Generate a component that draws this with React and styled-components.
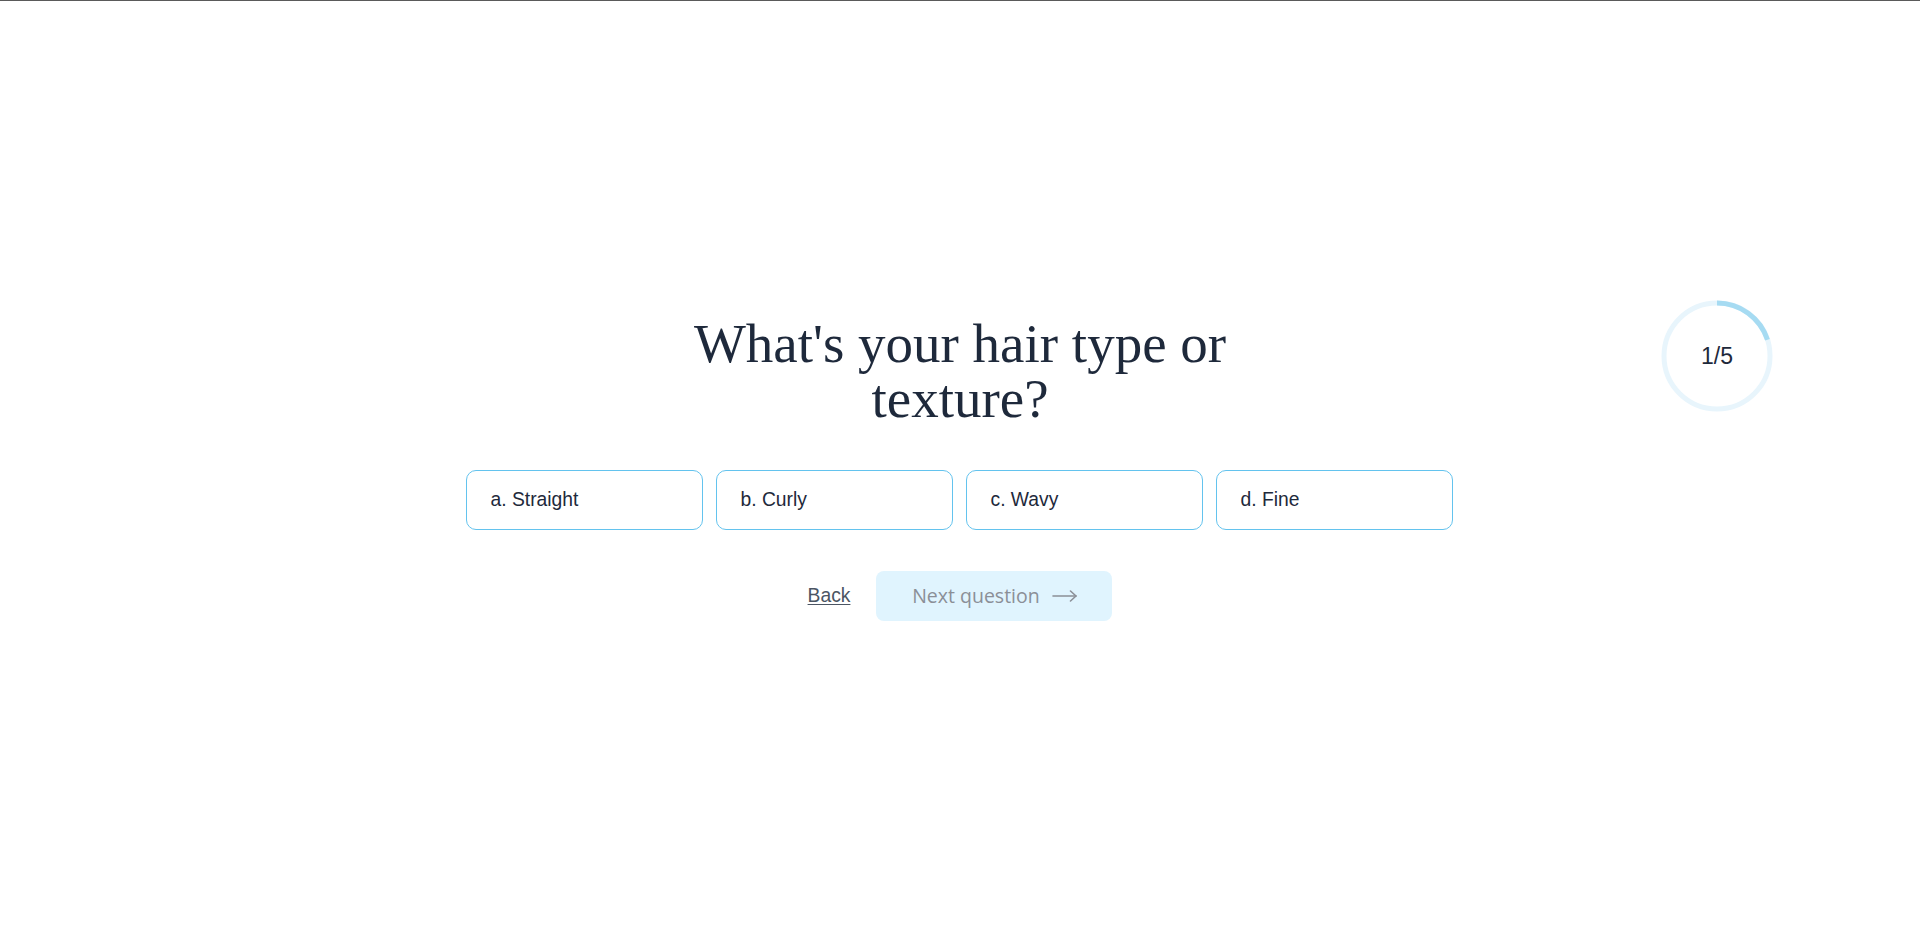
import React, { useState } from 'react'
import styled, { createGlobalStyle } from 'styled-components'

const options = ['a. Straight', 'b. Curly', 'c. Wavy', 'd. Fine']

export default () => {
  const [ selected, setSelected ] = useState(null)
  const step = 1
  const total = 5
  const r = 53
  const circ = 2 * Math.PI * r

  return(
  <Page>
    <GlobalStyle />
    <Quiz>
      <Title>What's your hair type or texture?</Title>
      <Options>
        {options.map(o => (
          <Option key={o} active={selected === o ? 'true' : 'false'} onClick={() => setSelected(o)}>{o}</Option>
        ))}
      </Options>
      <Actions>
        <Back href="#">Back</Back>
        <Next disabled={!selected}>
          Next question
          <svg width="25" height="12" viewBox="0 0 25 12" fill="none" stroke="currentColor" strokeWidth="1.6" strokeLinecap="round" strokeLinejoin="round">
            <path d="M1 6h23" />
            <path d="M18.5 1l5.5 5-5.5 5" />
          </svg>
        </Next>
      </Actions>
    </Quiz>
    <Progress>
      <svg width="112" height="112" viewBox="0 0 112 112">
        <circle cx="56" cy="56" r={r} fill="none" stroke="#e8f5fc" strokeWidth="5" />
        <circle cx="56" cy="56" r={r} fill="none" stroke="#a6dbf2" strokeWidth="5"
          strokeDasharray={`${circ * step / total} ${circ}`} transform="rotate(-90 56 56)" />
      </svg>
      <Count>{step}/{total}</Count>
    </Progress>
  </Page>
)}

const GlobalStyle = createGlobalStyle`
  html, body {
    margin: 0;
    padding: 0;
    background: #fff;
  }
`

const Page = styled.main`
  position: relative;
  box-sizing: border-box;
  min-height: 935px;
  border-top: 1px solid #5a5a5a;
  display: flex;
  align-items: center;
  justify-content: center;
  font-family: "Liberation Sans", Arial, sans-serif;
`

const Quiz = styled.section`
  display: flex;
  flex-direction: column;
  align-items: center;
  margin-top: 0;
`

const Title = styled.h1`
  margin: 0;
  max-width: 600px;
  text-align: center;
  font-family: "Liberation Serif", "Times New Roman", serif;
  font-weight: 400;
  font-size: 55px;
  line-height: 55px;
  color: #1e293b;
`

const Options = styled.div`
  display: grid;
  grid-template-columns: repeat(4, 237px);
  gap: 13px;
  margin-top: 44px;
  margin-right: 2px;
`

const Option = styled.button`
  height: 60px;
  box-sizing: border-box;
  padding: 0 24px;
  text-align: left;
  background: ${ props => props.active === 'true' ? '#e6f6fd' : '#fff' };
  border: 1px solid #63c3ee;
  border-radius: 10px;
  font-family: "Liberation Sans", Arial, sans-serif;
  font-size: 19.3px;
  color: #1e293b;
  cursor: pointer;
`

const Actions = styled.div`
  display: flex;
  align-items: center;
  gap: 26px;
  margin-top: 41px;
`

const Back = styled.a`
  font-size: 19.3px;
  color: #4b5563;
  text-decoration: underline;
  text-underline-offset: 2px;
`

const Next = styled.button`
  width: 236px;
  height: 50px;
  display: flex;
  align-items: center;
  justify-content: center;
  gap: 12px;
  border: none;
  border-radius: 8px;
  background: #e0f4fe;
  color: #8b8f97;
  font-family: "Open Sans", "Noto Sans", sans-serif;
  font-size: 19.5px;
  padding: 0;

  svg {
    margin-top: 1px;
  }
`

const Progress = styled.div`
  position: absolute;
  top: 299px;
  right: 147px;
  width: 112px;
  height: 112px;
  display: flex;
  align-items: center;
  justify-content: center;

  svg {
    position: absolute;
    inset: 0;
  }
`

const Count = styled.span`
  position: relative;
  font-size: 23px;
  color: #1e293b;
`
